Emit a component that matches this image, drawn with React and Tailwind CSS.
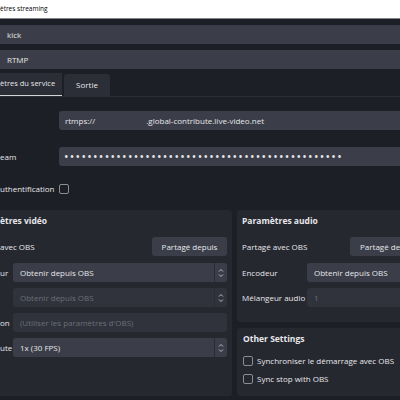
import React from "react";

const font = { fontFamily: '"Open Sans", "Noto Sans", sans-serif' };

function Spin() {
  return (
    <div className="flex h-full w-[13px] shrink-0 items-center justify-center border-l border-[#2a2c35]">
      <svg width="6" height="10" viewBox="0 0 6 10" fill="none" stroke="#b9bbc2" strokeWidth="1">
        <path d="M1 3.5 L3 1.5 L5 3.5" />
        <path d="M1 6.5 L3 8.5 L5 6.5" />
      </svg>
    </div>
  );
}

function Field({ children, spin, disabled, className = "" }) {
  return (
    <div
      className={`flex h-[19px] items-center rounded-[3px] ${disabled ? "bg-[#30323c] text-[#6c6f79]" : "bg-[#3b3e48] text-[#e6e7ea]"} ${className}`}
    >
      <span className="flex-1 whitespace-nowrap pl-[7px] leading-[19px]">{children}</span>
      {spin && <Spin />}
    </div>
  );
}

function Check({ label }) {
  return (
    <div className="flex items-center gap-[4px]">
      <div className="h-[10px] w-[10px] shrink-0 rounded-[2px] border border-[#8b8d95]" />
      {label && <span className="whitespace-nowrap leading-[10px]">{label}</span>}
    </div>
  );
}

export default function App() {
  return (
    <div
      className="h-[400px] w-[400px] overflow-hidden bg-[#1d1f26] text-[8px] leading-none text-[#e6e7ea]"
      style={font}
    >
      {/* window title */}
      <div className="flex h-[19px] items-center border-b border-[#85868b] bg-white text-[6.5px] text-black">
        ètres streaming
      </div>

      {/* service */}
      <div className="flex flex-col gap-[6px] pt-[6px]">
        <Field className="w-[420px] shrink-0 rounded-none">kick</Field>
        <Field className="w-[420px] shrink-0 rounded-none">RTMP</Field>
      </div>

      {/* tabs */}
      <div className="mt-[4px] flex h-[24px] items-end gap-[2px] border-b border-[#2b2d37]">
        <div className="flex h-[23px] w-[62px] shrink-0 items-center whitespace-nowrap border-b border-[#d4d5d9] bg-[#2b2d37] text-[7.5px]">
          ètres du service
        </div>
        <div className="flex h-[22px] w-[46px] shrink-0 items-center justify-center rounded-t-[3px] bg-[#2b2d37]">
          Sortie
        </div>
      </div>

      {/* form */}
      <div className="flex flex-col pt-[14px]">
        <div className="flex h-[19px] items-center">
          <div className="w-[59px] shrink-0" />
          <div className="flex h-[19px] w-[360px] shrink-0 items-center whitespace-nowrap rounded-l-[3px] bg-[#3b3e48] pl-[6px]">
            <span>rtmps://</span>
            <span className="w-[51px]" />
            <span>.global-contribute.live-video.net</span>
          </div>
        </div>
        <div className="mt-[17px] flex h-[19px] items-center">
          <div className="w-[59px] shrink-0">eam</div>
          <div className="flex h-[19px] w-[360px] shrink-0 items-center overflow-hidden whitespace-nowrap rounded-l-[3px] bg-[#3b3e48] pl-[5px] text-[12px] tracking-[1.3px]">
            ••••••••••••••••••••••••••••••••••••••••••••••••
          </div>
        </div>
        <div className="mt-[18px] flex h-[10px] items-center">
          <div className="w-[59px] shrink-0 whitespace-nowrap">uthentification</div>
          <Check />
        </div>
      </div>

      {/* groups */}
      <div className="mt-[16px] flex gap-[5px]">
        <div className="flex h-[186px] w-[232px] shrink-0 flex-col rounded-r-[3px] bg-[#262830] pr-[5px]">
          <div className="flex h-[23px] items-center whitespace-nowrap text-[8.5px] font-bold">ètres vidéo</div>
          <div className="mt-[4px] flex h-[19px] items-center justify-between">
            <span>avec OBS</span>
            <div className="flex h-[19px] w-[75px] items-center justify-center rounded-[3px] bg-[#3b3e48]">
              Partagé depuis
            </div>
          </div>
          <div className="mt-[7px] flex items-center gap-[7px]">
            <span className="w-[6px]">ur</span>
            <Field spin className="flex-1">Obtenir depuis OBS</Field>
          </div>
          <div className="mt-[6px] flex items-center gap-[7px]">
            <span className="w-[6px]" />
            <Field spin disabled className="flex-1">Obtenir depuis OBS</Field>
          </div>
          <div className="mt-[6px] flex items-center gap-[5px]">
            <span className="w-[8px]">on</span>
            <Field disabled className="flex-1">(Utiliser les paramètres d'OBS)</Field>
          </div>
          <div className="mt-[6px] flex items-center gap-[5px]">
            <span className="w-[8px]">ute</span>
            <Field spin className="flex-1">1x (30 FPS)</Field>
          </div>
        </div>

        <div className="flex w-[200px] shrink-0 flex-col gap-[6px]">
          <div className="flex h-[112px] flex-col rounded-[3px] bg-[#262830] pl-[5px]">
            <div className="flex h-[23px] items-center whitespace-nowrap text-[8.5px] font-bold">Paramètres audio</div>
            <div className="mt-[4px] flex h-[19px] items-center">
              <span className="w-[108px] shrink-0 whitespace-nowrap">Partagé avec OBS</span>
              <div className="flex h-[19px] w-[75px] shrink-0 items-center whitespace-nowrap rounded-[3px] bg-[#3b3e48] pl-[10px]">
                Partagé depuis
              </div>
            </div>
            <div className="mt-[7px] flex items-center">
              <span className="w-[65px] shrink-0 whitespace-nowrap">Encodeur</span>
              <Field className="flex-1">Obtenir depuis OBS</Field>
            </div>
            <div className="mt-[6px] flex items-center">
              <span className="w-[65px] shrink-0 whitespace-nowrap">Mélangeur audio</span>
              <Field disabled className="flex-1">1</Field>
            </div>
          </div>
          <div className="flex h-[68px] flex-col rounded-[3px] bg-[#262830] pl-[6px]">
            <div className="flex h-[22px] items-center whitespace-nowrap text-[8.5px] font-bold">Other Settings</div>
            <div className="mt-[6px] flex flex-col gap-[8px]">
              <Check label="Synchroniser le démarrage avec OBS" />
              <Check label="Sync stop with OBS" />
            </div>
          </div>
        </div>
      </div>
    </div>
  );
}
